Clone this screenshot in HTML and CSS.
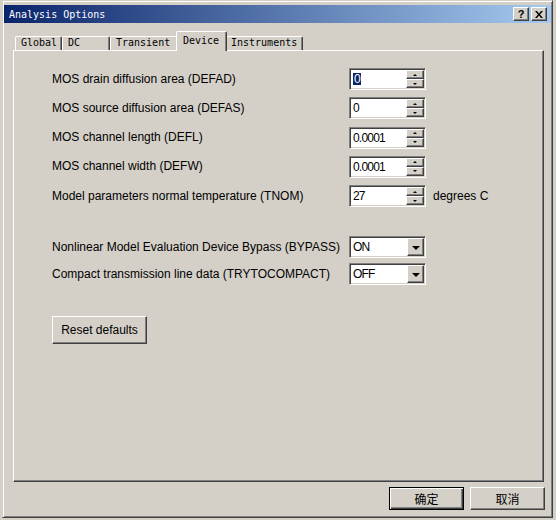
FILE: index.html
```html
<!DOCTYPE html>
<html>
<head>
<meta charset="utf-8">
<link rel="stylesheet" href="styles.css">
</head>
<body>
<div class="window">
  <div class="titlebar">
    <span class="title">Analysis Options</span>
    <div class="tbtns">
      <span class="tbtn help">?</span>
      <span class="tbtn close"><svg width="8" height="7" viewBox="0 0 8 7"><path d="M0 0h2l2 2.5L6 0h2L5 3.5 8 7H6L4 4.5 2 7H0l3-3.5z" fill="#000"/></svg></span>
    </div>
  </div>
  <div class="tabs">
    <div class="tab t-global">Global</div>
    <div class="tab t-dc">DC</div>
    <div class="tab t-transient">Transient</div>
    <div class="tab t-device sel">Device</div>
    <div class="tab t-instr">Instruments</div>
  </div>
  <div class="panel">
    <div class="fields">
      <div class="lbl">MOS drain diffusion area (DEFAD)</div>
      <div class="spin"><span class="val"><span class="hl">0</span></span><span class="spbtns"><span class="spb"><i class="up"></i></span><span class="spb"><i class="dn"></i></span></span></div>
      <div></div>
      <div class="lbl">MOS source diffusion area (DEFAS)</div>
      <div class="spin"><span class="val">0</span><span class="spbtns"><span class="spb"><i class="up"></i></span><span class="spb"><i class="dn"></i></span></span></div>
      <div></div>
      <div class="lbl">MOS channel length (DEFL)</div>
      <div class="spin"><span class="val">0.0001</span><span class="spbtns"><span class="spb"><i class="up"></i></span><span class="spb"><i class="dn"></i></span></span></div>
      <div></div>
      <div class="lbl">MOS channel width (DEFW)</div>
      <div class="spin"><span class="val">0.0001</span><span class="spbtns"><span class="spb"><i class="up"></i></span><span class="spb"><i class="dn"></i></span></span></div>
      <div></div>
      <div class="lbl">Model parameters normal temperature (TNOM)</div>
      <div class="spin"><span class="val">27</span><span class="spbtns"><span class="spb"><i class="up"></i></span><span class="spb"><i class="dn"></i></span></span></div>
      <div class="unit">degrees C</div>
    </div>
    <div class="fields combos">
      <div class="lbl">Nonlinear Model Evaluation Device Bypass (BYPASS)</div>
      <div class="combo"><span class="val">ON</span><span class="ddbtn"><i class="dd"></i></span></div>
      <div></div>
      <div class="lbl">Compact transmission line data (TRYTOCOMPACT)</div>
      <div class="combo"><span class="val">OFF</span><span class="ddbtn"><i class="dd"></i></span></div>
      <div></div>
    </div>
    <button class="btn reset">Reset defaults</button>
  </div>
  <div class="footer">
    <button class="btn cjk default">确定</button>
    <button class="btn cjk">取消</button>
  </div>
</div>
</body>
</html>
```

FILE: styles.css
```css
* { box-sizing: border-box; }
body {
  margin: 0;
  background: #d4d0c8;
  width: 556px;
  height: 520px;
  overflow: hidden;
}
.window {
  margin-left: 2px;
  width: 551px;
  height: 518px;
  background: #d4d0c8;
  border: 1px solid;
  border-color: #d4d0c8 #404040 #404040 #d4d0c8;
  box-shadow: inset 1px 1px #fff, inset -1px -1px #808080;
  padding: 1px;
  display: flex;
  flex-direction: column;
}
.titlebar {
  margin-top: 3px;
  height: 18px;
  flex: none;
  background: linear-gradient(to right, #0a246a, #a6caf0);
  display: flex;
  align-items: center;
  justify-content: space-between;
  padding: 0 4px 0 5px;
}
.title {
  font: 10px/12px "DejaVu Sans Mono", monospace;
  color: #fff;
  padding-top: 1px;
}
.tbtns { display: flex; gap: 2px; }
.tbtn {
  width: 16px;
  height: 14px;
  background: #d4d0c8;
  border: 1px solid;
  border-color: #fff #404040 #404040 #fff;
  box-shadow: inset -1px -1px #808080;
  display: flex;
  align-items: center;
  justify-content: center;
  font: bold 11px/12px "Liberation Sans", sans-serif;
  color: #000;
}
.tabs {
  margin-top: 8px;
  height: 19px;
  flex: none;
  display: flex;
  align-items: flex-end;
  padding-left: 11px;
  position: relative;
  z-index: 1;
}
.tab {
  height: 14px;
  background: #d4d0c8;
  border-top: 1px solid #fff;
  border-left: 1px solid #fff;
  border-right: 1px solid #404040;
  box-shadow: inset -1px 0 #808080;
  border-radius: 2px 2px 0 0;
  font: 10px/12px "DejaVu Sans Mono", monospace;
  color: #000;
  padding: 0 0 0 5px;
  white-space: nowrap;
}
.t-global { width: 47px; }
.t-dc { width: 48px; }
.t-transient { width: 68px; }
.t-instr { width: 78px; }
.t-device {
  width: 51px;
  margin: 0 -2px -1px;
  height: 20px;
  padding: 3px 0 0 6px;
  position: relative;
  z-index: 2;
}
.panel {
  margin-left: 9px;
  width: 531px;
  height: 432px;
  flex: none;
  border: 1px solid;
  border-color: #fff #404040 #404040 #fff;
  box-shadow: inset -1px -1px #808080;
  padding: 17px 0 0 38px;
}
.fields {
  display: grid;
  grid-template-columns: 297px 77px auto;
  row-gap: 7.25px;
  align-items: center;
  font: 12px "Liberation Sans", Arial, sans-serif;
  color: #000;
}
.combos { margin-top: 29px; row-gap: 5px; }
.lbl { white-space: nowrap; padding-bottom: 1px; }
.unit { margin-left: 7px; }
.spin, .combo {
  width: 77px;
  height: 22px;
  background: #fff;
  border: 1px solid;
  border-color: #808080 #fff #fff #808080;
  box-shadow: inset 1px 1px #404040, inset -1px -1px #d4d0c8;
  padding: 1px;
  display: flex;
}
.val {
  flex: 1;
  padding-left: 2px;
  display: flex;
  align-items: center;
  letter-spacing: -0.8px;
  font-size: 12px;
}
.hl { background: #0a246a; color: #fff; padding: 0 1px; line-height: 12px; }
.spbtns { width: 18px; display: flex; flex-direction: column; }
.spb {
  height: 9px;
  background: #d4d0c8;
  border: 1px solid;
  border-color: #fff #404040 #404040 #fff;
  box-shadow: inset -1px -1px #808080;
  display: flex;
  align-items: center;
  justify-content: center;
}
.up, .dn { width: 0; height: 0; border-left: 2px solid transparent; border-right: 2px solid transparent; }
.up { border-bottom: 2px solid #000; }
.dn { border-top: 2px solid #000; }
.ddbtn {
  width: 17px;
  background: #d4d0c8;
  border: 1px solid;
  border-color: #fff #404040 #404040 #fff;
  box-shadow: inset -1px -1px #808080;
  display: flex;
  align-items: center;
  justify-content: center;
}
.dd {
  width: 0; height: 0;
  border-left: 4px solid transparent;
  border-right: 4px solid transparent;
  border-top: 4px solid #000;
  margin-top: 1px;
}
.btn {
  display: block;
  background: #d4d0c8;
  border: 1px solid;
  border-color: #fff #404040 #404040 #fff;
  box-shadow: inset -1px -1px #808080;
  font: 12px "Liberation Sans", Arial, sans-serif;
  color: #000;
  padding: 0;
  margin: 0;
}
.reset { margin-top: 31px; width: 95px; height: 28px; }
.footer {
  margin-top: 5px;
  display: flex;
  justify-content: flex-end;
  gap: 6px;
  padding-right: 6px;
}
.cjk {
  width: 75px;
  height: 23px;
  font: 12px "Noto Sans CJK SC", sans-serif;
}
.default {
  border: 1px solid #000;
  box-shadow: inset 1px 1px #fff, inset -1px -1px #404040, inset -2px -2px #808080;
}
```
